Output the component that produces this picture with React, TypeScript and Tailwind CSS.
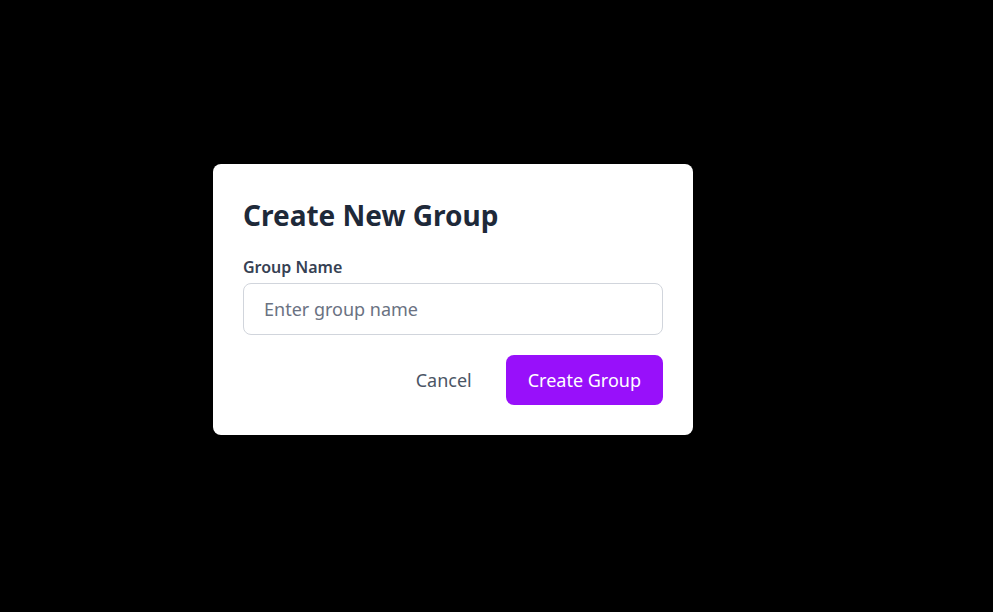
import React, { useState } from 'react';

export default function App() {
  const [groupName, setGroupName] = useState('');

  return (
    <div
      className="min-h-screen w-full bg-black pt-[164px] pl-[213px]"
      style={{ fontFamily: '"Segoe UI", "Noto Sans", sans-serif' }}
    >
      <div className="w-[480px] bg-white rounded-lg px-[30px] pt-[35px] pb-[30px]">
        <h2 className="text-[28px] leading-8 font-bold text-gray-800 mb-6">Create New Group</h2>

        <label className="block text-base font-semibold text-gray-700 mb-1">Group Name</label>
        <input
          type="text"
          value={groupName}
          onChange={(e) => setGroupName(e.target.value)}
          placeholder="Enter group name"
          className="w-full h-[52px] px-5 border border-gray-300 rounded-lg text-lg text-gray-800 placeholder:text-gray-500 focus:outline-none"
        />

        <div className="flex justify-end items-center gap-[14px] mt-5">
          <button className="px-5 h-[50px] text-lg text-gray-600 cursor-pointer">Cancel</button>
          <button className="px-[22px] h-[50px] bg-purple-600 text-white text-lg rounded-lg cursor-pointer">
            Create Group
          </button>
        </div>
      </div>
    </div>
  );
}
